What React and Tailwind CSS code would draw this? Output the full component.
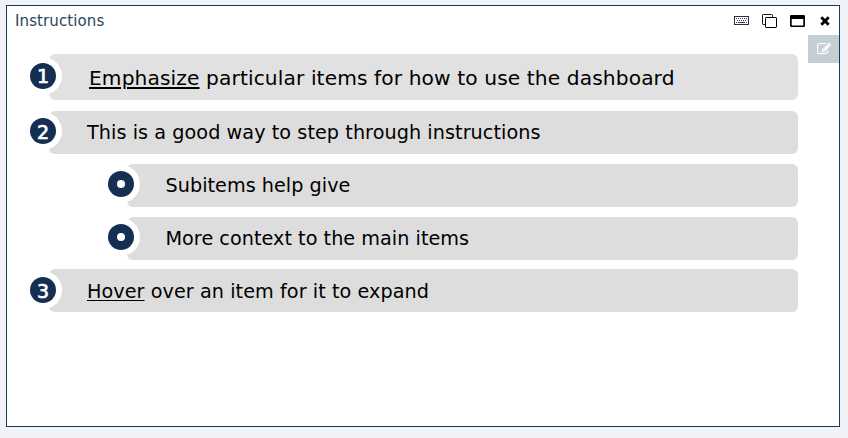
import React from "react";

function KeyboardIcon() {
  return (
    <svg width="15" height="9" viewBox="0 0 15 9" shapeRendering="crispEdges">
      <rect x="0.5" y="0.5" width="14" height="8" fill="#fff" stroke="#2c2c4c" />
      <path d="M2 2.5h11M3 4.5h10" stroke="#333344" strokeDasharray="1 1" />
      <path d="M2 6.5h1M4 6.5h7M12 6.5h1" stroke="#333344" />
    </svg>
  );
}

function CloneIcon() {
  return (
    <svg width="15" height="14" viewBox="0 0 15 14" fill="none" stroke="#000">
      <path d="M3.5 10.5H1.2a.7.7 0 0 1-.7-.7V1.2a.7.7 0 0 1 .7-.7h8.6a.7.7 0 0 1 .7.7V3" strokeWidth="0.9" />
      <rect x="3.5" y="3.5" width="11" height="10" rx="0.6" />
    </svg>
  );
}

function WindowIcon() {
  return (
    <svg width="15" height="12" viewBox="0 0 15 12">
      <path fillRule="evenodd" d="M1.3 0h12.4A1.3 1.3 0 0 1 15 1.3v9.4a1.3 1.3 0 0 1-1.3 1.3H1.3A1.3 1.3 0 0 1 0 10.7V1.3A1.3 1.3 0 0 1 1.3 0zM1.7 4v6.5h11.6V4z" />
    </svg>
  );
}

function CloseIcon() {
  return (
    <svg width="10" height="10" viewBox="0 0 10 10">
      <path d="M1.3 1.3L8.7 8.7M8.7 1.3L1.3 8.7" stroke="#000" strokeWidth="2.9" />
    </svg>
  );
}

function EditIcon() {
  return (
    <svg width="14" height="12" viewBox="0 0 1792 1536" fill="#fff" stroke="#fff" strokeWidth="40">
      <path d="M888 1056l116-116-152-152-116 116v56h96v96h56zm440-720q-16-16-33 1L945 687q-17 17-1 33t33-1l350-350q17-17 1-33zm80 594v190q0 119-84.500 203.500T1120 1408H288q-119 0-203.500-84.500T0 1120V288Q0 169 84.500 84.500T288 0h832q63 0 117 25 15 7 18 23 3 17-9 29l-49 49q-14 14-32 8-23-6-45-6H288q-66 0-113 47t-47 113v832q0 66 47 113t113 47h832q66 0 113-47t47-113V994q0-13 9-22l64-64q15-15 35-7t20 29zm-96-738l288 288-672 672H640V864zm444 132l-92 92-288-288 92-92q28-28 68-28t68 28l152 152q28 28 28 68t-28 68z" />
    </svg>
  );
}

function Item({ marker, className, markerClass = "-mt-[20.5px]", textClass, children }) {
  return (
    <li className={`relative flex shrink-0 items-center rounded-[6px] ${className}`}>
      <span className={`absolute -left-[25px] top-1/2 flex h-[38px] w-[38px] items-center justify-center rounded-full bg-white ${markerClass}`}>
        <span className="flex h-[26px] w-[26px] items-center justify-center rounded-full bg-[#142f52] text-white">
          {marker ? (
            <span className="pt-[2px] text-[19px] leading-none [-webkit-text-stroke:0.7px_white]">{marker}</span>
          ) : (
            <span className="h-2 w-2 rounded-full bg-white" />
          )}
        </span>
      </span>
      <span className={`whitespace-nowrap leading-none text-black ${textClass}`}>{children}</span>
    </li>
  );
}

export default function App() {
  return (
    <div className="h-[438px] w-[848px] bg-[#f1f2f7] pl-[6px] pt-[5px] font-['Verdana','DejaVu_Sans',sans-serif]">
      <section className="flex h-[422px] w-[834px] flex-col border border-[#123f60] bg-white">
        <header className="flex h-[29px] shrink-0 items-center pl-2 pr-[9px]">
          <h1 className="mr-auto pt-[2px] text-[15px] leading-none tracking-[0.1px] text-[#2b4659]">Instructions</h1>
          <div className="flex items-center">
            <span className="mr-[13px]"><KeyboardIcon /></span>
            <span className="mr-[13px]"><CloneIcon /></span>
            <span className="mr-[15px]"><WindowIcon /></span>
            <CloseIcon />
          </div>
        </header>
        <div className="flex items-start">
          <ol className="flex w-[791px] flex-col pl-[42px] pt-[19px]">
            <Item marker="1" className="mb-[11px] h-[46px] bg-[#e1e1e1] pl-[40px]" textClass="pt-[2px] text-[20.2px] tracking-[0.11px]">
              <u className="underline decoration-2 underline-offset-2">Emphasize</u> particular items for how to use the dashboard
            </Item>
            <Item marker="2" className="mb-[10px] h-[43px] bg-[#dddddd] pl-[38px]" textClass="text-[19.2px] tracking-[0.07px]">
              This is a good way to step through instructions
            </Item>
            <Item className="mb-[10px] ml-[78px] h-[43px] bg-[#dddddd] pl-[38.5px]" textClass="text-[19.2px] tracking-[0.04px]">
              Subitems help give
            </Item>
            <Item className="mb-[9px] ml-[78px] h-[43px] bg-[#dddddd] pl-[38.5px]" textClass="text-[19.2px] tracking-[0.04px]">
              More context to the main items
            </Item>
            <Item marker="3" markerClass="-mt-[19.5px]" className="h-[43px] bg-[#dddddd] pl-[38px]" textClass="pt-[2px] text-[19.2px] tracking-[0.07px]">
              <u className="underline decoration-1 underline-offset-2">Hover</u> over an item for it to expand
            </Item>
          </ol>
          <button className="ml-[10px] flex h-[28px] w-[31px] items-center justify-center bg-[#c4ced5]">
            <EditIcon />
          </button>
        </div>
      </section>
    </div>
  );
}
